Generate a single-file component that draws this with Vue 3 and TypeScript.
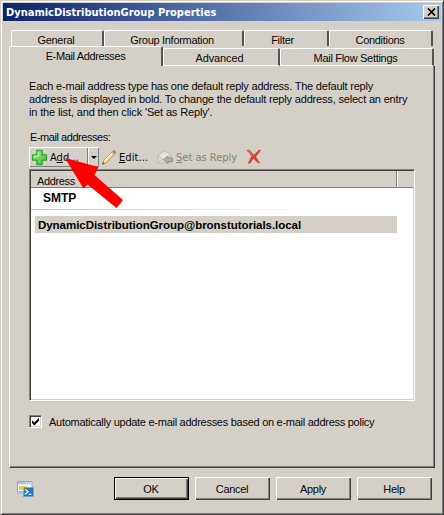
<script setup lang="ts">
interface Tab {
  label: string
  cls: string
}

const backTabs: Tab[] = [
  { label: 'General', cls: 'general' },
  { label: 'Group Information', cls: 'group' },
  { label: 'Filter', cls: 'filter' },
  { label: 'Conditions', cls: 'conditions' },
]
const frontTabs: Tab[] = [
  { label: 'E-Mail Addresses', cls: 'active' },
  { label: 'Advanced', cls: 'advanced' },
  { label: 'Mail Flow Settings', cls: 'mailflow' },
]
const buttons: string[] = ['OK', 'Cancel', 'Apply', 'Help']
</script>

<template>
  <div class="window">
    <header class="titlebar">
      <span class="title">DynamicDistributionGroup Properties</span>
      <button class="close" aria-label="Close">
        <svg width="9" height="8" viewBox="0 0 9 8"><path d="M1 .5L8 7.5M8 .5L1 7.5" stroke="#000" stroke-width="1.7" /></svg>
      </button>
    </header>

    <nav class="row back">
      <div v-for="t in backTabs" :key="t.label" class="tab" :class="t.cls"><span>{{ t.label }}</span></div>
    </nav>
    <nav class="row front">
      <div v-for="t in frontTabs" :key="t.label" class="tab" :class="t.cls"><span>{{ t.label }}</span></div>
    </nav>

    <main class="panel">
      <p class="intro">
        <span class="l1">Each e-mail address type has one default reply address. The default reply</span>
        <span class="l2">address is displayed in bold. To change the default reply address, select an entry</span>
        <span class="l3">in the list, and then click 'Set as Reply'.</span>
      </p>
      <div class="caption">E-mail addresses:</div>

      <div class="toolbar">
        <button class="add">
          <svg width="17" height="17" viewBox="0 0 17 17">
            <defs>
              <linearGradient id="plus" x1="0" y1="0" x2="1" y2="1">
                <stop offset="0" stop-color="#a4ee88" />
                <stop offset="1" stop-color="#3fc02f" />
              </linearGradient>
            </defs>
            <path d="M5.8 1.5h5.4v4.3h4.3v5.4h-4.3v4.3H5.8v-4.3H1.5V5.8h4.3z" fill="url(#plus)" stroke="#2fa535" stroke-width="1.3" stroke-linejoin="round" />
            <path d="M7.3 2.8v4.5H2.8" fill="none" stroke="#c9f7b3" />
          </svg>
          <span class="tool-text">A<u>d</u>d...</span>
        </button>
        <button class="drop"><i class="caret"></i></button>
        <div class="edit">
          <svg width="17" height="17" viewBox="0 0 17 17">
            <path d="M1.6 15.2L2.8 11.4 11.9 2.3l2.2 2.2L5.2 13.8z" fill="#f9e48c" stroke="#a08245" stroke-width=".8" />
            <path d="M3.6 11.4L11.8 3.2" stroke="#fff7c8" />
            <path d="M12 2.3q1.2-1.3 2.2-.3t0 2.4z" fill="#db8476" stroke="#a06f60" stroke-width=".6" />
            <path d="M11 3.1l2.4 2.4" stroke="#93aab4" stroke-width="1.1" />
            <path d="M1.3 15.5l.8-2.2 1.4 1.4z" fill="#403d36" />
          </svg>
          <span class="tool-text"><u>E</u>dit...</span>
        </div>
        <div class="reply">
          <svg width="17" height="15" viewBox="0 0 17 15">
            <path d="M1 5.5L6 1h3l5 4.5V13H1z" fill="#deddd8" stroke="#bdbbb5" />
            <path d="M3 4h8v5H3z" fill="#e8e7e3" />
            <path d="M1 6l6 4 7-4M1 13l5-4" fill="none" stroke="#bbb9b3" />
            <path d="M6.5 9.8L10.8 6v2.2h4.7v3.3h-4.7v2.2z" fill="#b3b1ab" stroke="#8f8e89" />
          </svg>
          <span class="tool-text"><u>S</u>et as Reply</span>
        </div>
        <svg class="remove" width="16" height="16" viewBox="0 0 16 16">
          <path d="M1 1.4Q3 .5 4.6 2.5L8 6.2 13.2.9l1.5.3-5.1 6.5 4 6-1.4.3-4.8-4.7-3.2 4.8-2 .2 3.5-7.1Q3.3 3.5 1 1.4z" fill="#dd4029" stroke="#b83b29" stroke-width=".5" />
          <path d="M2.3 1.8l5 5.5" stroke="#f7866c" />
        </svg>
      </div>

      <section class="list">
        <div class="head"><div class="col"><span>Address</span></div><div class="rest"></div></div>
        <div class="type"><span>SMTP</span></div>
        <div class="rule"></div>
        <div class="entry"><span>DynamicDistributionGroup@bronstutorials.local</span></div>
      </section>

      <label class="policy">
        <span class="check">
          <svg width="9" height="9" viewBox="0 0 9 9"><path d="M1 3.2L3.3 5.6 8 1v2.7L3.3 8.4 1 6z" fill="#000" /></svg>
        </span>
        <span class="policy-text">Automatically update e-mail addresses based on e-mail address policy</span>
      </label>
    </main>

    <footer class="footer">
      <svg class="shell" width="17" height="17" viewBox="0 0 17 17">
        <path d="M.5.5h14.5v11.5H.5z" fill="#f4f8fc" stroke="#8ba6c6" />
        <path d="M1 1h13.5v2.3H1z" fill="#a9c2df" />
        <path d="M9 2h1M11 2h1M13 2h1" stroke="#fff" />
        <path d="M2 5h8v4H2z" fill="#f0d22c" />
        <path d="M2 10.5h4" stroke="#8aa6c6" />
        <path d="M7 6.5h9.5v9H6.2z" fill="#2379bd" stroke="#68acd8" stroke-width=".7" />
        <path d="M8.2 8.2l3 2.6-3.4 2.6M11.5 13.3H14.5" fill="none" stroke="#fff" stroke-width="1.1" />
      </svg>
      <button v-for="b in buttons" :key="b" class="btn" :class="{ primary: b === 'OK' }"><span>{{ b }}</span></button>
    </footer>

    <svg class="pointer" width="62" height="53" viewBox="0 0 62 53">
      <path d="M2 1L35.5 10 31.5 18 60 43 53.5 51 24.5 27.5 20.5 31.5z" fill="#fe0000" />
    </svg>
  </div>
</template>

<style>
body { margin: 0; background: #d4d0c8; }
</style>

<style scoped>
* { box-sizing: border-box; }
.window {
  position: relative; width: 444px; height: 515px; background: #d4d0c8; overflow: hidden;
  font: 11px/13px "Liberation Sans", Arial, sans-serif; color: #080808; white-space: nowrap;
  border: 1px solid #d4d0c8; border-right-color: #404040; border-bottom-color: #404040;
  box-shadow: inset 1px 1px #fff, inset -1px -1px #808080; padding: 2px;
}
button { font: inherit; color: inherit; padding: 0; margin: 0; border: 0; background: #d4d0c8; }
.titlebar {
  height: 18px; display: flex; align-items: center; justify-content: space-between; padding: 0 2px 0 3px;
  background: linear-gradient(90deg, #0a246a, #a6caf0);
}
.title { color: #fff; font: bold 11px/16px "DejaVu Sans Condensed", "DejaVu Sans", sans-serif; padding-top: 1px; }
.close {
  width: 16px; height: 14px; display: flex; align-items: center; justify-content: center;
  box-shadow: inset 1px 1px #fff, inset -1px -1px #404040, inset -2px -2px #808080;
}
.row { display: flex; }
.back { padding: 9px 0 0 8px; }
.front { padding-left: 6px; align-items: flex-end; }
.tab {
  height: 16px; display: flex; justify-content: center; padding-top: 3px; letter-spacing: -0.3px;
  border: 1px solid #fff; border-right: 2px solid #555; border-bottom: 0; border-radius: 2px 2px 0 0;
}
.general { width: 93px; padding-right: 2px; }
.group { width: 140px; padding-right: 3px; }
.filter { width: 85px; padding-right: 7px; }
.conditions { width: 104px; padding-right: 1px; }
.front .tab { height: 18px; border-bottom: 1px solid #fff; padding-top: 3px; }
.front .active { width: 154px; height: 20px; border-bottom: 0; padding-top: 3px; letter-spacing: -0.37px; }
.front .advanced { width: 117px; letter-spacing: -0.1px; padding-right: 3px; }
.front .mailflow { width: 154px; padding-right: 2px; }
.panel {
  margin-left: 6px; width: 426px; height: 402px; padding: 14px 0 0 19px;
  border: solid #fff; border-width: 0 1px 1px 1px; border-right-color: #404040; border-bottom-color: #404040;
  box-shadow: inset -1px -1px #808080;
}
.intro { margin: 0; display: flex; flex-direction: column; align-items: flex-start; }
.l1 { letter-spacing: -0.21px; }
.l2 { letter-spacing: -0.18px; }
.l3 { letter-spacing: -0.14px; }
.caption { margin-top: 12px; padding-left: 1px; letter-spacing: -0.45px; }
.toolbar { height: 22px; margin-top: 3px; display: flex; align-items: flex-start; }
.tool-text { font: 11px/14px "DejaVu Sans Condensed", "DejaVu Sans", sans-serif; padding-top: 2px; }
.add { width: 59px; height: 20px; display: flex; align-items: center; padding-left: 2px; gap: 2px; box-shadow: inset 1px 1px #fff, inset -1px -1px #808080; }
.drop { width: 11px; height: 20px; display: flex; align-items: center; justify-content: center; box-shadow: inset 1px 1px #fff, inset -1px -1px #808080; }
.caret { border: solid transparent; border-width: 3px 3px 0; border-top-color: #000; }
.edit, .reply { display: flex; height: 20px; align-items: center; gap: 2px; }
.edit { margin-left: 2px; width: 56px; gap: 1px; letter-spacing: 0.1px; }
.reply { color: #85837d; width: 89px; }
.remove { margin-top: 2px; }
.list {
  width: 386px; height: 232px; background: #fff; border: 1px solid; border-color: #808080 #fff #fff #808080;
  box-shadow: inset 1px 1px #404040, inset -1px -1px #d4d0c8; padding: 1px;
}
.head { height: 17px; display: flex; background: #d4d0c8; border-bottom: 1px solid #808080; }
.col { width: 366px; padding: 4px 0 0 6px; border-right: 1px solid #808080; letter-spacing: -0.35px; line-height: 12px; }
.rest { flex: 1; border-left: 1px solid #fff; }
.type { font-weight: bold; height: 20px; padding: 3px 0 0 12px; font-size: 12px; line-height: 15px; }
.rule { height: 1px; width: 300px; background: linear-gradient(90deg, #adc9dc, #fff); margin: 1px 0 6px; }
.entry { margin-left: 4px; width: 362px; height: 17px; background: #d4d0c8; padding-left: 3px; font-weight: bold; font-size: 11.5px; letter-spacing: -0.04px; line-height: 18px; color: #000; }
.policy { display: flex; height: 13px; margin-top: 14px; gap: 7px; }
.policy-text { letter-spacing: -0.27px; padding-top: 1px; }
.check {
  width: 13px; height: 13px; background: #fff; padding: 1px; display: flex; border: 1px solid; border-color: #808080 #fff #fff #808080;
  box-shadow: inset 1px 1px #404040, inset -1px -1px #d4d0c8;
}
.footer { display: flex; gap: 6px; padding: 9px 0 0 14px; }
.shell { margin: 4px 74px 0 0; }
.btn { width: 75px; height: 23px; display: flex; align-items: center; justify-content: center; padding: 2px 1px 0 0; letter-spacing: -0.3px; box-shadow: inset 1px 1px #fff, inset -1px -1px #404040, inset -2px -2px #808080; }
.primary { border: 1px solid #000; }
.pointer { position: absolute; left: 62px; top: 156px; }
</style>
